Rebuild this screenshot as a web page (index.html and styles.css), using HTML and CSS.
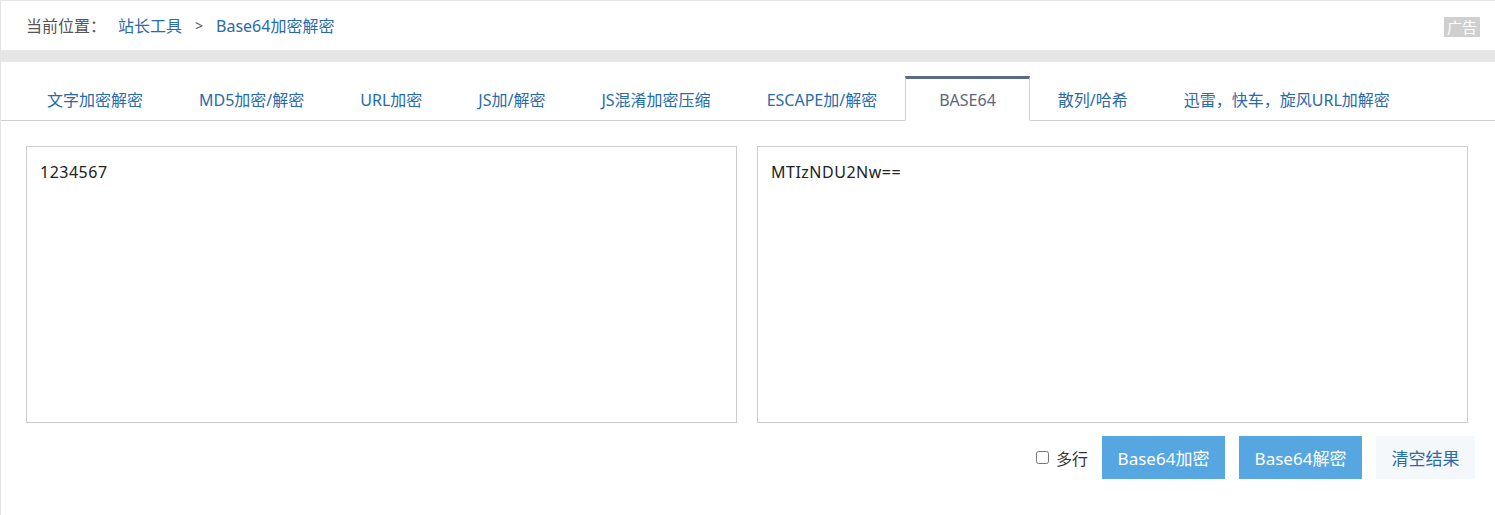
FILE: index.html
```html
<!DOCTYPE html>
<html lang="zh-CN">
<head>
<meta charset="utf-8">
<title>Base64加密解密</title>
<link rel="stylesheet" href="styles.css">
</head>
<body>
<div class="page">
  <div class="crumbs">
    <div class="crumb-path">
      <span class="crumb-label">当前位置：</span>
      <a class="crumb-link" href="#">站长工具</a>
      <span class="crumb-sep">&gt;</span>
      <a class="crumb-link" href="#">Base64加密解密</a>
    </div>
    <span class="ad-tag">广告</span>
  </div>
  <div class="band"></div>
  <ul class="tabs">
    <li class="tab"><a href="#">文字加密解密</a></li>
    <li class="tab"><a href="#">MD5加密/解密</a></li>
    <li class="tab"><a href="#">URL加密</a></li>
    <li class="tab"><a href="#">JS加/解密</a></li>
    <li class="tab"><a href="#">JS混淆加密压缩</a></li>
    <li class="tab"><a href="#">ESCAPE加/解密</a></li>
    <li class="tab active"><a href="#">BASE64</a></li>
    <li class="tab"><a href="#">散列/哈希</a></li>
    <li class="tab"><a href="#">迅雷，快车，旋风URL加解密</a></li>
  </ul>
  <div class="tool">
    <div class="panes">
      <textarea class="pane">1234567</textarea>
      <textarea class="pane">MTIzNDU2Nw==</textarea>
    </div>
    <div class="actions">
      <label class="multi"><input type="checkbox" class="check"><span>多行</span></label>
      <button class="btn btn-primary">Base64加密</button>
      <button class="btn btn-primary">Base64解密</button>
      <button class="btn btn-light">清空结果</button>
    </div>
  </div>
</div>
</body>
</html>
```

FILE: styles.css
```css
* { box-sizing: border-box; }
html, body { margin: 0; padding: 0; background: #fff; }
body {
  font-family: "Noto Sans", "Noto Sans CJK SC", sans-serif;
  color: #333;
  width: 1495px;
  height: 515px;
  overflow: hidden;
}
.page {
  border-left: 1px solid #e3e3e3;
  border-top: 1px solid #e6e6e6;
  height: 515px;
}
.crumbs {
  height: 49px;
  display: flex;
  align-items: center;
  justify-content: space-between;
  padding: 0 15px 0 25px;
}
.crumb-path {
  display: flex;
  align-items: center;
  font-size: 16px;
  line-height: 20px;
  margin-top: 1px;
}
.crumb-label { color: #555; margin-right: 12px; }
.crumb-link { color: #2a6aa8; text-decoration: none; }
.crumb-sep { color: #555; margin: 0 13px; font-size: 14px; }
.ad-tag {
  background: #cfcfcf;
  color: #fff;
  font-size: 15px;
  line-height: 20px;
  padding: 0 3px;
  margin-top: 2px;
}
.band {
  height: 12px;
  background: #e6e6e6;
}
.tabs {
  list-style: none;
  margin: 0;
  padding: 14px 0 0 18px;
  display: flex;
  border-bottom: 1px solid #d0d0d0;
  height: 59px;
}
.tab a {
  display: block;
  padding: 0 27px;
  height: 44px;
  line-height: 42px;
  font-size: 16px;
  color: #2a6aa8;
  text-decoration: none;
  border: 1px solid transparent;
  border-top: 3px solid transparent;
}
.tab.active { margin-bottom: -1px; }
.tab.active a {
  background: #fff;
  color: #5a6680;
  border-color: #d0d0d0;
  border-top-color: #586a85;
  border-bottom-color: #fff;
  height: 45px;
  padding: 0 33px;
}
.tool {
  padding: 25px 27px 0 25px;
}
.panes {
  display: grid;
  grid-template-columns: 1fr 1fr;
  gap: 20px;
}
.pane {
  height: 277px;
  border: 1px solid #cccccc;
  padding: 13px 13px;
  font-family: "Noto Sans", "Noto Sans CJK SC", sans-serif;
  font-size: 16px;
  letter-spacing: 0.5px;
  line-height: 24px;
  color: #222;
  resize: none;
  outline: none;
}
.actions {
  display: flex;
  justify-content: flex-end;
  align-items: center;
  gap: 14px;
  margin-top: 13px;
  margin-right: -7px;
}
.multi {
  display: flex;
  align-items: center;
  font-size: 16px;
  color: #333;
  gap: 7px;
}
.check {
  margin: 0;
  width: 13px;
  height: 13px;
}
.btn {
  height: 43px;
  border: 0;
  font-family: "Noto Sans", "Noto Sans CJK SC", sans-serif;
  font-size: 17px;
  padding: 0;
  cursor: pointer;
}
.btn-primary {
  width: 123px;
  background: #55a6e1;
  color: #fff;
}
.btn-light {
  width: 99px;
  background: #f4f8fb;
  color: #2a6aa8;
}
```
